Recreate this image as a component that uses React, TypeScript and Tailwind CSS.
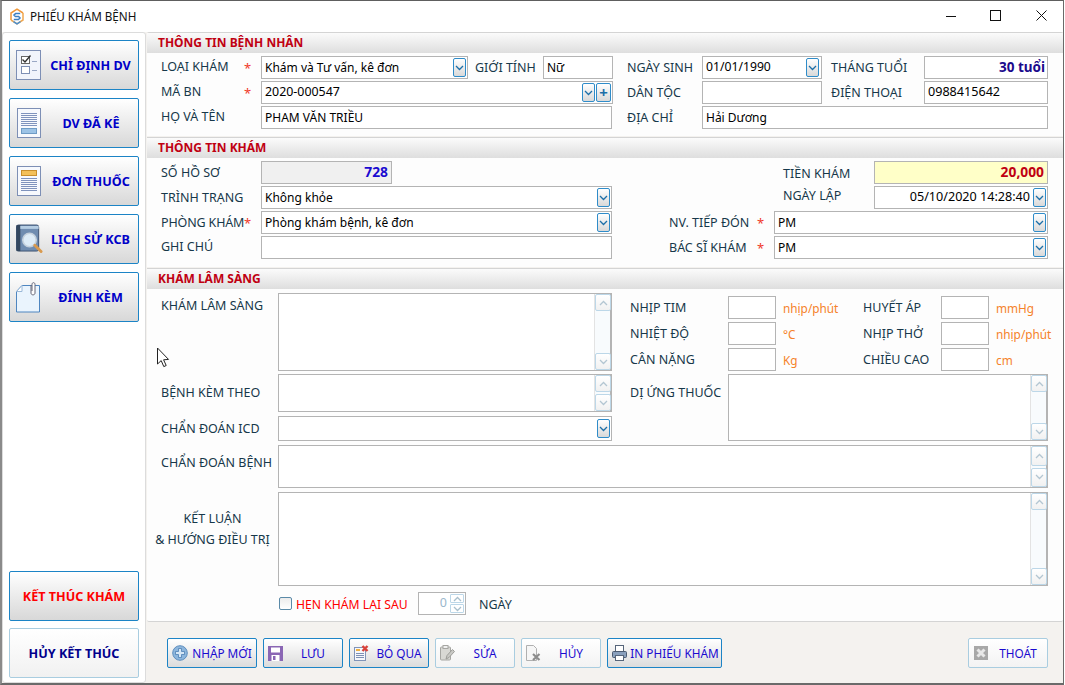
import React from "react";

const labelCls = "shrink-0 text-[12.5px] leading-[16px] text-[#17384a] whitespace-nowrap";

function Chevron({ up = false, color = "#1d6fa8" }: { up?: boolean; color?: string }) {
  return (
    <svg width="9" height="6" viewBox="0 0 9 6" className="block">
      <path d={up ? "M1 5 L4.5 1.5 L8 5" : "M1 1 L4.5 4.5 L8 1"} fill="none" stroke={color} strokeWidth="1.3" />
    </svg>
  );
}

function DropBtn({ className = "" }: { className?: string }) {
  return (
    <span className={`flex h-[19px] w-[13px] shrink-0 items-center justify-center rounded-[2px] border border-[#2f8cc9] bg-gradient-to-b from-white to-[#d9d9d9] ${className}`}>
      <Chevron />
    </span>
  );
}

function Box({ className = "", skin = "bg-white text-[12px] text-black", children }: { className?: string; skin?: string; children?: React.ReactNode }) {
  return (
    <div className={`flex shrink-0 items-center border border-[#b4b4b4] pl-[3px] whitespace-nowrap ${skin} ${className}`}>
      {children}
    </div>
  );
}

function Select({ className = "", children }: { className?: string; children?: React.ReactNode }) {
  return (
    <Box className={`justify-between ${className}`}>
      <span>{children}</span>
      <DropBtn />
    </Box>
  );
}

function Star({ className = "" }: { className?: string }) {
  return <span className={`text-[13px] leading-[16px] text-[#f03a2a] ${className}`}>*</span>;
}

function Header({ children }: { children: React.ReactNode }) {
  return (
    <div className="flex h-[20px] shrink-0 items-center bg-gradient-to-b from-[#fbfbfb] to-[#dedede] pl-[11px] text-[12px] font-bold text-[#c00012]">
      {children}
    </div>
  );
}

function ScrollBtn({ up = false, grow = false }: { up?: boolean; grow?: boolean }) {
  return (
    <span className={`flex w-[16px] items-center justify-center rounded-[2px] border border-[#bcd7e8] bg-gradient-to-b from-white to-[#f1f1f1] ${grow ? "min-h-0 flex-1" : "h-[17px]"}`}>
      <Chevron up={up} color="#b3c6d2" />
    </span>
  );
}

function Memo({ className = "", compact = false }: { className?: string; compact?: boolean }) {
  return (
    <div className={`flex shrink-0 justify-end border border-[#b4b4b4] bg-white ${className}`}>
      <div className="flex w-[17px] flex-col justify-between border-l border-[#e3e3e3] border-r border-r-[#b4b4b4] bg-[#f8fbfd]">
        {compact ? (
          <>
            <ScrollBtn up grow />
            <span className="h-[2px]" />
            <ScrollBtn grow />
          </>
        ) : (
          <>
            <ScrollBtn up />
            <ScrollBtn />
          </>
        )}
      </div>
    </div>
  );
}

function Logo() {
  return (
    <svg width="16" height="17" viewBox="0 0 16 17">
      <path d="M2 12 L2 5 L8 1.2 L14 5" fill="none" stroke="#f0983a" strokeWidth="1.5" />
      <path d="M2 12 L8 15.8 L14 12 L14 5" fill="none" stroke="#f0a850" strokeWidth="1.5" />
      <path d="M4.5 13.6 L8 15.8 L11.5 13.6" fill="none" stroke="#4a8fd0" strokeWidth="1.5" />
      <path d="M11.2 5.6 H6.6 L5 7 L6.4 8.5 H9.6 L11 10 L9.4 11.5 H4.8" fill="none" stroke="#3c7fc2" strokeWidth="1.5" />
    </svg>
  );
}

const pageLines = (y: number[], x1 = 4, x2 = 20) =>
  y.map((v) => <path key={v} d={`M${x1} ${v + 0.5}H${x2}`} stroke="#7f93bd" strokeWidth="1" />);

function IconChecklist() {
  return (
    <svg width="25" height="30" viewBox="0 0 25 30">
      <rect x="0.5" y="0.5" width="24" height="29" fill="#f1f4fb" stroke="#7d8fb5" />
      <rect x="5.5" y="6.5" width="8" height="7" fill="#fff" stroke="#666" />
      <path d="M6.5 9.5 L9 12 L14.5 5.5" fill="none" stroke="#333" strokeWidth="1.4" />
      <rect x="5.5" y="16.5" width="8" height="7" fill="#fff" stroke="#7d8fb5" />
      <path d="M16 11.5H21M16 20.5H21" stroke="#9aa8c4" />
    </svg>
  );
}
function IconList() {
  return (
    <svg width="24" height="30" viewBox="0 0 24 30">
      <rect x="0.5" y="0.5" width="23" height="29" fill="#f7f9fd" stroke="#7d8fb5" />
      {pageLines([5, 7, 9, 11, 13, 15, 17])}
      <rect x="4.5" y="20.5" width="15" height="5" fill="#9cc3e6" stroke="#6f9cc6" />
    </svg>
  );
}
function IconRx() {
  return (
    <svg width="24" height="30" viewBox="0 0 24 30">
      <rect x="0.5" y="0.5" width="23" height="29" fill="#f7f9fd" stroke="#7d8fb5" />
      <rect x="4.5" y="4.5" width="15" height="5" fill="#f3c05a" stroke="#c98f2e" />
      {pageLines([12, 14, 16, 18, 20, 22, 24])}
    </svg>
  );
}
function IconHistory() {
  return (
    <svg width="28" height="30" viewBox="0 0 28 30">
      <rect x="0.5" y="0.5" width="23" height="27" rx="2" fill="#6f8cb0" stroke="#3d5270" />
      <rect x="0.5" y="0.5" width="4" height="27" fill="#33475f" />
      <rect x="4.5" y="1.5" width="19" height="3" fill="#b5cde3" />
      <circle cx="14" cy="16" r="7" fill="#dcebf7" stroke="#c4d0dc" strokeWidth="1.6" />
      <path d="M19.5 21.5 L26 28" stroke="#d99a4e" strokeWidth="3" strokeLinecap="round" />
    </svg>
  );
}
function IconAttach() {
  return (
    <svg width="25" height="31" viewBox="0 0 25 31">
      <path d="M6 3.5 H23.5 V30 H0.5 V9.5 Z" fill="#eaf4fd" stroke="#4f86c0" />
      <path d="M0.5 9.5 H6 V3.5 Z" fill="#fff" stroke="#9ab8d8" />
      <path d="M15 3 V11 C15 13.5 19 13.5 19 11 V2.5 C19 0 16 0 16 2.5 V9" fill="#fff" stroke="#667" strokeWidth="1" />
    </svg>
  );
}

function IconPlus() {
  return (
    <svg width="16" height="16" viewBox="0 0 16 16">
      <circle cx="8" cy="8" r="7.3" fill="#8db6dd" stroke="#5f8fbf" />
      <path d="M6.5 3.5H9.5V6.5H12.5V9.5H9.5V12.5H6.5V9.5H3.5V6.5H6.5Z" fill="#d5e6f5" stroke="#4d7fb2" strokeWidth="0.8" />
    </svg>
  );
}
function IconSave() {
  return (
    <svg width="15" height="15" viewBox="0 0 15 15">
      <rect width="15" height="15" fill="#8a66b4" />
      <rect x="3" y="1.5" width="9" height="5" fill="#fff" />
      <rect x="3.5" y="9" width="8" height="6" fill="#fff" />
      <rect x="5" y="10" width="2.5" height="4" fill="#8a66b4" />
    </svg>
  );
}
function IconCancel() {
  return (
    <svg width="15" height="16" viewBox="0 0 15 16">
      <rect x="0.5" y="2.5" width="11" height="13" fill="#f5f7fc" stroke="#8194b8" />
      <rect x="2" y="4" width="4" height="2" fill="#f0b040" />
      <path d="M2 8.5H10M2 10.5H10M2 12.5H10" stroke="#7d90b5" />
      <path d="M8.5 1 L13.5 6 M13.5 1 L8.5 6" stroke="#d8413a" strokeWidth="2.4" />
    </svg>
  );
}
function IconEdit() {
  return (
    <svg width="15" height="16" viewBox="0 0 15 16">
      <rect x="0.5" y="2" width="10" height="13" rx="1" fill="#d8d8d4" stroke="#a6a6a2" />
      <rect x="3" y="0.5" width="5" height="3" fill="#efefef" stroke="#a6a6a2" />
      <path d="M6 14 L7 10.5 L12.5 4.5 L14.5 6.5 L9 12.5 Z" fill="#c9c9c5" stroke="#9c9c98" />
    </svg>
  );
}
function IconDelete() {
  return (
    <svg width="15" height="16" viewBox="0 0 15 16">
      <path d="M0.5 0.5 H7.5 L10.5 3.5 V15.5 H0.5 Z" fill="#f6f6f6" stroke="#b0b0b0" />
      <path d="M7 9 L13.5 15 M13.5 9 L7 15" stroke="#8c8c8c" strokeWidth="2.2" />
    </svg>
  );
}
function IconPrint() {
  return (
    <svg width="15" height="16" viewBox="0 0 15 16">
      <rect x="3.5" y="0.5" width="8" height="6" fill="#fff" stroke="#56657a" />
      <rect x="0.5" y="6.5" width="14" height="6" rx="1" fill="#8aa0bd" stroke="#4d5c72" />
      <rect x="3.5" y="10.5" width="8" height="5" fill="#fff" stroke="#56657a" />
    </svg>
  );
}
function IconExit() {
  return (
    <svg width="14" height="14" viewBox="0 0 14 14">
      <rect width="14" height="14" fill="#a8a8a8" />
      <path d="M3.5 3.5 L10.5 10.5 M10.5 3.5 L3.5 10.5" stroke="#e8e8e8" strokeWidth="3" />
    </svg>
  );
}

function SideBtn({ icon, children, tone = "blue", faint = false, inset = "ml-[6px]" }: { icon?: React.ReactNode; children: React.ReactNode; tone?: "blue" | "red" | "navy"; faint?: boolean; inset?: string }) {
  const color = tone === "red" ? "text-[#ff0000]" : tone === "navy" ? "text-[#00008c]" : "text-[#0000c8]";
  return (
    <button className={`flex h-[50px] w-[130px] shrink-0 items-center rounded-[2px] border ${faint ? "border-[#a9cde0] from-white to-[#f1f1f1]" : "border-[#1c84c6] from-white to-[#d8d8d8]"} bg-gradient-to-b text-[12.6px] font-bold ${color}`}>
      {icon ? (
        <>
          <span className={`flex w-[27px] shrink-0 justify-start ${inset}`}>{icon}</span>
          <span className="flex-1 pt-[2px] text-center">{children}</span>
        </>
      ) : (
        <span className="w-full pt-[2px] text-center">{children}</span>
      )}
    </button>
  );
}

function BarBtn({ icon, children, faint = false, className = "" }: { icon: React.ReactNode; children: React.ReactNode; faint?: boolean; className?: string }) {
  return (
    <button className={`flex h-[30px] shrink-0 items-center rounded-[2px] border pl-[3px] text-[11.8px] text-[#1a0ad0] ${faint ? "border-[#a9cde0] from-white to-[#f3f3f3]" : "border-[#1c84c6] from-white to-[#dcdcdc]"} bg-gradient-to-b ${className}`}>
      <span className="flex w-[17px] shrink-0 justify-center">{icon}</span>
      <span className="flex-1 pt-[2px] text-center whitespace-nowrap">{children}</span>
    </button>
  );
}

function Vital({ label, unit }: { label: string; unit: string }) {
  return (
    <>
      <span className={labelCls}>{label}</span>
      <Box className="h-[23px] w-[48px]" />
      <span className="pl-[7px] text-[11.8px] leading-[16px] text-[#f5822a] whitespace-nowrap">{unit}</span>
    </>
  );
}

function Cursor() {
  return (
    <svg className="absolute left-[154px] top-[346px]" width="14" height="22" viewBox="0 0 14 22">
      <path d="M1.5 1 V17 L5.2 13.6 L7.8 19.6 L10.2 18.5 L7.6 12.8 L12.5 12.4 Z" fill="#fff" stroke="#222" strokeWidth="1" />
    </svg>
  );
}

export default function App() {
  return (
    <div className="relative flex h-[685px] w-[1064px] flex-col overflow-hidden border-t border-r border-b-2 border-l-2 border-t-[#5e5e5e] border-r-[#6a6a6a] border-b-[#6a6a6a] border-l-[#8a8a8a] bg-white font-['Noto_Sans','Liberation_Sans',sans-serif]">
      {/* title bar */}
      <div className="flex h-[31px] shrink-0 items-center bg-white pl-[7px]">
        <Logo />
        <span className="ml-[5px] text-[11.7px] text-[#111]">PHIẾU KHÁM BỆNH</span>
        <div className="ml-auto flex items-center pr-[16px] pb-[2px]">
          <svg width="12" height="12" viewBox="0 0 12 12"><path d="M1 6.5H11" stroke="#111" strokeWidth="1" /></svg>
          <svg className="ml-[33px]" width="11" height="11" viewBox="0 0 11 11"><rect x="0.5" y="0.5" width="10" height="10" fill="none" stroke="#111" /></svg>
          <svg className="ml-[35px]" width="11" height="11" viewBox="0 0 11 11"><path d="M0.5 0.5 L10.5 10.5 M10.5 0.5 L0.5 10.5" stroke="#111" /></svg>
        </div>
      </div>

      <div className="flex min-h-0 flex-1 bg-[#f4f2ef]">
        {/* sidebar */}
        <aside className="flex w-[144px] shrink-0 flex-col rounded-[3px] border border-[#dcdcdc] bg-white px-[6px] pt-[7px]">
          <div className="flex flex-col gap-[8px]">
            <SideBtn icon={<IconChecklist />}>CHỈ ĐỊNH DV</SideBtn>
            <SideBtn icon={<IconList />} inset="ml-[7px]">DV ĐÃ KÊ</SideBtn>
            <SideBtn icon={<IconRx />} inset="ml-[7px]">ĐƠN THUỐC</SideBtn>
            <SideBtn icon={<IconHistory />}>LỊCH SỬ KCB</SideBtn>
            <SideBtn icon={<IconAttach />}>ĐÍNH KÈM</SideBtn>
          </div>
          <div className="mt-auto flex flex-col gap-[7px] pb-[4px]">
            <SideBtn tone="red">KẾT THÚC KHÁM</SideBtn>
            <SideBtn tone="navy" faint>HỦY KẾT THÚC</SideBtn>
          </div>
        </aside>

        <main className="ml-[1px] flex min-w-0 flex-1 flex-col">
          {/* thông tin bệnh nhân */}
          <section className="flex h-[104px] shrink-0 flex-col rounded-t-[2px] border-t border-[#d4d4d4] bg-[#fdfdfd]">
            <Header>THÔNG TIN BỆNH NHÂN</Header>
            <div className="flex flex-col gap-[2px] pt-[3px] pl-[14px]">
              <div className="flex h-[23px] items-center">
                <span className={`${labelCls} w-[83px] pb-[2px]`}>LOẠI KHÁM</span>
                <Star className="w-[17px]" />
                <Select className="h-[23px] w-[207px] pr-[1px]">Khám và Tư vấn, kê đơn</Select>
                <span className={`${labelCls} ml-[7px] w-[68px]`}>GIỚI TÍNH</span>
                <Box className="h-[23px] w-[70px]">Nữ</Box>
                <span className={`${labelCls} ml-[14px] w-[75px]`}>NGÀY SINH</span>
                <Select className="h-[23px] w-[120px] pr-[2px]"><span className="text-[12.2px]">01/01/1990</span></Select>
                <span className={`${labelCls} ml-[9px] w-[93px]`}>THÁNG TUỔI</span>
                <Box className="h-[23px] w-[124px] justify-end pr-[2px]" skin="bg-white text-[13.5px] font-bold text-[#1a0a8c]">30 tuổi</Box>
              </div>
              <div className="flex h-[23px] items-center">
                <span className={`${labelCls} w-[83px] pb-[2px]`}>MÃ BN</span>
                <Star className="w-[17px]" />
                <Box className="h-[23px] w-[352px] justify-between pr-[1px]">
                  <span className="text-[12.4px]">2020-000547</span>
                  <span className="flex gap-[1px]">
                    <DropBtn />
                    <span className="flex h-[19px] w-[15px] items-center justify-center rounded-[2px] border border-[#2f8cc9] bg-gradient-to-b from-white to-[#d9d9d9] text-[15px] leading-none font-bold text-[#1d6fa8]">+</span>
                  </span>
                </Box>
                <span className={`${labelCls} ml-[14px] w-[75px]`}>DÂN TỘC</span>
                <Box className="h-[23px] w-[120px]" />
                <span className={`${labelCls} ml-[9px] w-[93px]`}>ĐIỆN THOẠI</span>
                <Box className="h-[23px] w-[124px]" skin="bg-white text-[12.6px] text-black">0988415642</Box>
              </div>
              <div className="flex h-[23px] items-center">
                <span className={`${labelCls} w-[100px] pb-[2px]`}>HỌ VÀ TÊN</span>
                <Box className="h-[23px] w-[351px]">PHAM VĂN TRIỀU</Box>
                <span className={`${labelCls} ml-[15px] w-[75px]`}>ĐỊA CHỈ</span>
                <Box className="h-[23px] w-[346px]">Hải Dương</Box>
              </div>
            </div>
          </section>

          {/* thông tin khám */}
          <section className="mt-[1px] flex h-[130px] shrink-0 flex-col border-t border-[#d4d4d4] bg-[#fdfdfd]">
            <Header>THÔNG TIN KHÁM</Header>
            <div className="flex flex-col gap-[2px] pt-[3px] pl-[14px]">
              <div className="flex h-[23px] items-center">
                <span className={`${labelCls} w-[100px]`}>SỐ HỒ SƠ</span>
                <Box className="h-[23px] w-[131px] justify-end pr-[3px]" skin="bg-[#f0f0f0] text-[13.8px] font-bold text-[#1a0ad0]">728</Box>
                <span className={`${labelCls} ml-[391px] w-[91px] pt-[3px]`}>TIỀN KHÁM</span>
                <Box className="h-[23px] w-[174px] justify-end pr-[3px]" skin="bg-[#ffffc8] text-[13.8px] font-bold text-[#c00012]">20,000</Box>
              </div>
              <div className="flex h-[23px] items-center">
                <span className={`${labelCls} w-[100px]`}>TRÌNH TRẠNG</span>
                <Select className="h-[23px] w-[351px] pr-[1px]">Không khỏe</Select>
                <span className={`${labelCls} ml-[171px] w-[91px] pb-[3px]`}>NGÀY LẬP</span>
                <Box className="h-[23px] w-[174px] justify-end gap-[3px] pr-[1px]">
                  <span className="text-[12.6px]">05/10/2020 14:28:40</span>
                  <DropBtn />
                </Box>
              </div>
              <div className="flex h-[23px] items-center">
                <span className={`${labelCls} w-[83px] tracking-[-0.15px]`}>PHÒNG KHÁM</span>
                <Star className="w-[17px]" />
                <Select className="h-[23px] w-[351px] pr-[1px]">Phòng khám bệnh, kê đơn</Select>
                <span className={`${labelCls} ml-[57px] w-[88px]`}>NV. TIẾP ĐÓN</span>
                <Star className="w-[17px]" />
                <Select className="h-[23px] w-[274px] pr-[1px]">PM</Select>
              </div>
              <div className="flex h-[23px] items-center">
                <span className={`${labelCls} w-[100px] pb-[2px]`}>GHI CHÚ</span>
                <Box className="h-[23px] w-[351px]" />
                <span className={`${labelCls} ml-[57px] w-[88px]`}>BÁC SĨ KHÁM</span>
                <Star className="w-[17px]" />
                <Select className="h-[23px] w-[274px] pr-[1px]">PM</Select>
              </div>
            </div>
          </section>

          {/* khám lâm sàng */}
          <section className="mt-[1px] flex h-[354px] shrink-0 flex-col rounded-b-[2px] border-t border-b border-[#d4d4d4] bg-[#fdfdfd]">
            <Header>KHÁM LÂM SÀNG</Header>
            <div className="flex pt-[4px] pl-[14px]">
              <div className="flex w-[451px] shrink-0 flex-col">
                <div className="flex">
                  <span className={`${labelCls} w-[117px] pt-[5px]`}>KHÁM LÂM SÀNG</span>
                  <Memo className="h-[78px] w-[334px]" />
                </div>
                <div className="mt-[3px] flex">
                  <span className={`${labelCls} w-[117px] pt-[11px]`}>BỆNH KÈM THEO</span>
                  <Memo compact className="h-[38px] w-[334px]" />
                </div>
                <div className="mt-[4px] flex items-center">
                  <span className={`${labelCls} w-[117px]`}>CHẨN ĐOÁN ICD</span>
                  <Select className="h-[25px] w-[334px] pr-[1px]"> </Select>
                </div>
              </div>
              <div className="ml-[18px] flex min-w-0 flex-1 flex-col pt-[3px]">
                <div className="grid grid-cols-[98px_48px_87px_78px_48px_1fr] items-center gap-y-[3px]">
                  <Vital label="NHỊP TIM" unit="nhịp/phút" />
                  <Vital label="HUYẾT ÁP" unit="mmHg" />
                  <Vital label="NHIỆT ĐỘ" unit="°C" />
                  <Vital label="NHỊP THỞ" unit="nhịp/phút" />
                  <Vital label="CÂN NẶNG" unit="Kg" />
                  <Vital label="CHIỀU CAO" unit="cm" />
                </div>
                <div className="mt-[3px] flex">
                  <span className={`${labelCls} w-[98px] pt-[11px]`}>DỊ ỨNG THUỐC</span>
                  <Memo className="h-[67px] w-[320px]" />
                </div>
              </div>
            </div>
            <div className="mt-[4px] flex pl-[14px]">
              <span className={`${labelCls} w-[117px] pt-[10px]`}>CHẨN ĐOÁN BỆNH</span>
              <Memo compact className="h-[43px] w-[770px]" />
            </div>
            <div className="mt-[4px] flex">
              <span className={`${labelCls} w-[131px] pt-[16px] text-center leading-[21px]`}>
                KẾT LUẬN
                <br />
                &amp; HƯỚNG ĐIỀU TRỊ
              </span>
              <Memo className="h-[94px] w-[770px]" />
            </div>
            <div className="mt-[6px] flex items-center pl-[131px]">
              <span className="ml-[1px] h-[13px] w-[13px] shrink-0 rounded-[2px] border border-[#5a8aa8] bg-gradient-to-b from-[#ececec] to-white" />
              <span className="ml-[4px] w-[122px] pt-[2px] text-[12.2px] leading-[16px] text-[#ff0000] whitespace-nowrap">HẸN KHÁM LẠI SAU</span>
              <div className="flex h-[23px] w-[48px] items-center justify-end border border-[#b4b4b4] bg-white pr-[1px]">
                <span className="pr-[3px] text-[12.5px] text-[#9ab7cc]">0</span>
                <span className="flex h-[19px] w-[14px] flex-col gap-[1px]">
                  <span className="flex flex-1 items-center justify-center rounded-[1px] border border-[#bcd7e8] bg-white"><Chevron up color="#a9bfcc" /></span>
                  <span className="flex flex-1 items-center justify-center rounded-[1px] border border-[#bcd7e8] bg-white"><Chevron color="#a9bfcc" /></span>
                </span>
              </div>
              <span className={`${labelCls} ml-[13px] pt-[2px]`}>NGÀY</span>
            </div>
          </section>

          {/* action bar */}
          <div className="flex min-h-0 flex-1 items-start gap-[6px] pt-[16px] pl-[20px]">
            <BarBtn icon={<IconPlus />} className="w-[90px]">NHẬP MỚI</BarBtn>
            <BarBtn icon={<IconSave />} className="w-[80px]">LƯU</BarBtn>
            <BarBtn icon={<IconCancel />} className="w-[80px]">BỎ QUA</BarBtn>
            <BarBtn icon={<IconEdit />} faint className="w-[80px]">SỬA</BarBtn>
            <BarBtn icon={<IconDelete />} faint className="w-[80px]">HỦY</BarBtn>
            <BarBtn icon={<IconPrint />} className="w-[115px]">IN PHIẾU KHÁM</BarBtn>
            <BarBtn icon={<IconExit />} faint className="ml-[240px] w-[80px]">THOÁT</BarBtn>
          </div>
        </main>
      </div>
      <Cursor />
    </div>
  );
}
